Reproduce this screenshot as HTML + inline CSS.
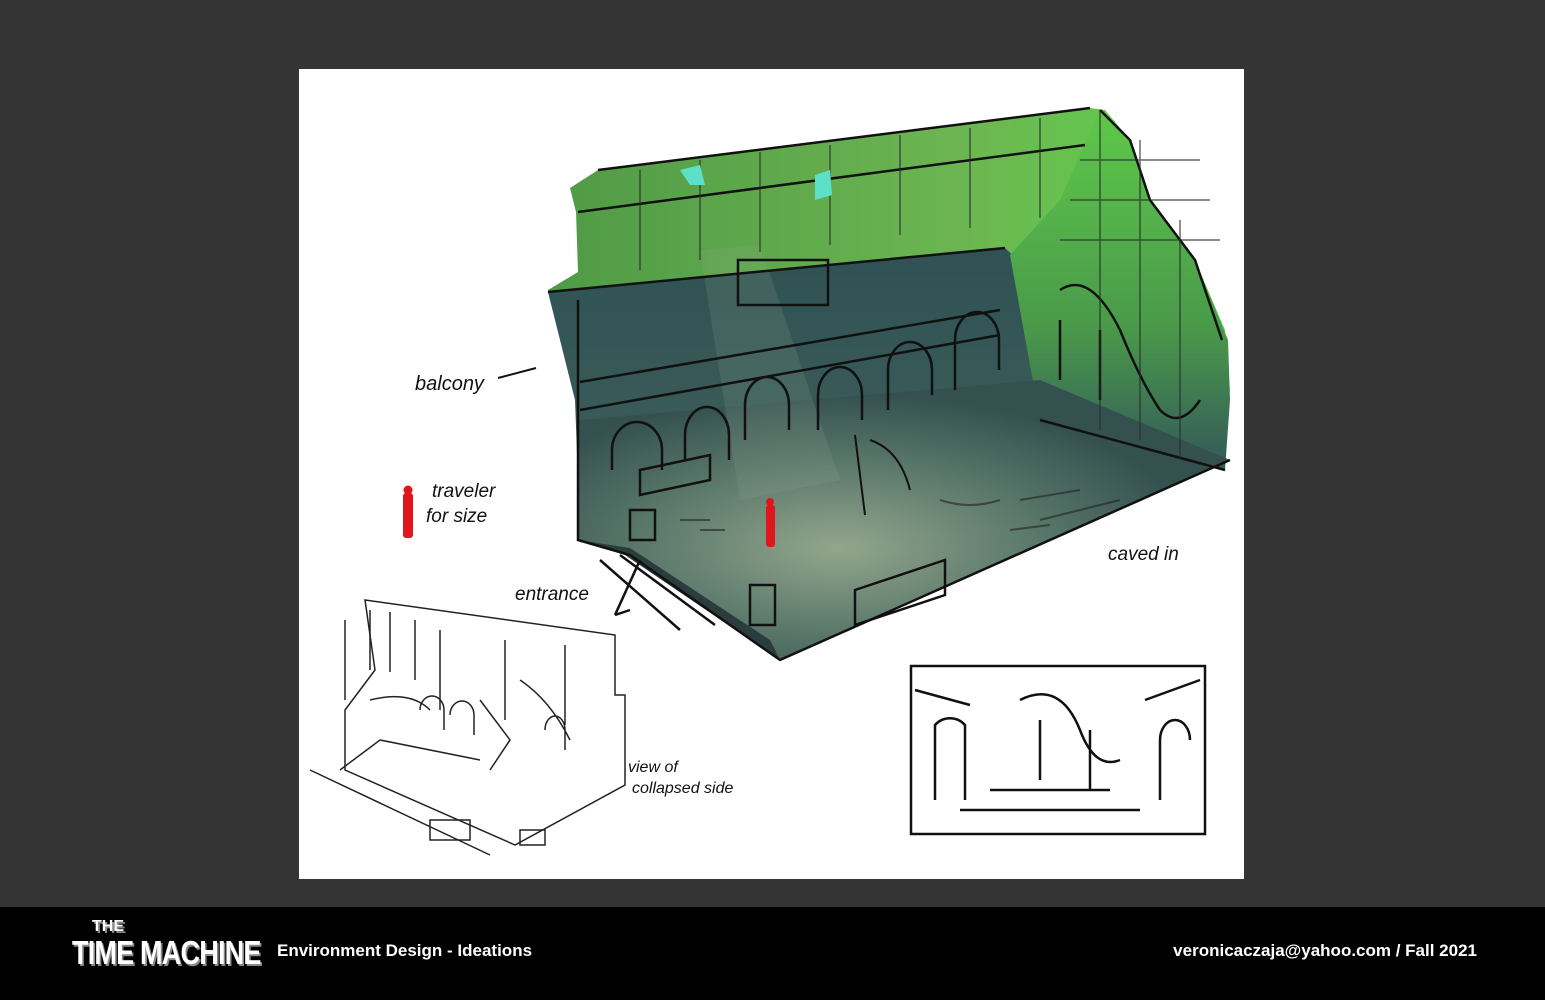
<!DOCTYPE html>
<html><head><meta charset="utf-8"><style>
body{margin:0;width:1545px;height:1000px;background:#343434;position:relative;overflow:hidden;font-family:"Liberation Sans",sans-serif}
#canvas{position:absolute;left:299px;top:69px;width:945px;height:810px;background:#fff}
#foot{position:absolute;left:0;top:907px;width:1545px;height:93px;background:#000;color:#fff}
.hand{font-family:"Liberation Sans",sans-serif;font-style:italic;fill:#111}
</style></head><body>
<div id="canvas"></div>
<svg width="1545" height="1000" style="position:absolute;left:0;top:0">
<defs>
<radialGradient id="fl" cx="0.4" cy="0.6" r="0.55"><stop offset="0" stop-color="#93a68c"/><stop offset="0.5" stop-color="#5f7c6e"/><stop offset="1" stop-color="#34514f"/></radialGradient>
<linearGradient id="gr" x1="0" y1="0" x2="1" y2="0"><stop offset="0" stop-color="#4f9a45"/><stop offset="0.6" stop-color="#6cb552"/><stop offset="1" stop-color="#5fd34a"/></linearGradient>
<linearGradient id="wl" x1="0" y1="0" x2="0" y2="1"><stop offset="0" stop-color="#2f5153"/><stop offset="1" stop-color="#3d5e5a"/></linearGradient>
<linearGradient id="rw" x1="0" y1="0" x2="0" y2="1"><stop offset="0" stop-color="#5ec84a"/><stop offset="0.6" stop-color="#4a9a4a"/><stop offset="1" stop-color="#33585a"/></linearGradient>
</defs>
<polygon points="570,188 598,170 1090,108 1105,110 1130,140 1150,200 1195,260 1225,330 1230,390 1200,430 1010,260 550,300 548,290 578,272 576,212" fill="url(#gr)"/>
<polygon points="548,292 1005,248 1040,280 1050,430 600,470 578,480 575,400" fill="url(#wl)"/>
<polygon points="1010,255 1060,200 1100,110 1130,140 1150,200 1195,260 1228,340 1230,400 1225,470 1100,440 1040,420" fill="url(#rw)"/>
<polygon points="578,420 1040,380 1230,460 780,660 625,555 578,540" fill="url(#fl)"/>
<polygon points="578,540 625,555 780,660 770,640 630,548" fill="#2a3d3c"/>
<polygon points="700,250 760,245 840,480 740,500" fill="#8fa890" opacity="0.18"/>
<g fill="none" stroke="#111" stroke-width="2.5">
<polyline points="598,170 1090,108"/><polyline points="578,212 1085,145"/>
<polyline points="548,292 1005,248"/><polyline points="580,382 1000,310"/><polyline points="580,410 1000,335"/>
<polyline points="578,300 578,540 630,555 780,660 1230,460"/>
<polyline points="1100,110 1130,140 1150,200 1195,260 1222,340"/>
<polyline points="1040,420 1225,470"/>
<path d="M612,470 v-20 a25,28 0 0 1 50,0 v20 M685,460 v-25 a22,28 0 0 1 44,0 v25 M745,440 v-35 a22,28 0 0 1 44,0 v25 M818,430 v-35 a22,28 0 0 1 44,0 v25 M888,410 v-40 a22,28 0 0 1 44,0 v25 M955,390 v-50 a22,28 0 0 1 44,0 v30"/>
<path d="M738,260 h90 v45 h-90z"/>
<path d="M1060,290 q30,-20 60,40 q20,50 40,80 q20,20 40,-10 M1060,320 v60 M1100,330 v70"/>
<path d="M640,470 l70,-15 v25 l-70,15z M855,590 l90,-30 v35 l-90,30z M750,585 h25 v40 h-25z M630,510 h25 v30 h-25z"/>
<path d="M600,560 l80,70 M620,555 l95,70 M640,560 l-25,55 M615,615 l15,-5"/>
<path d="M855,435 l10,80 M870,440 q30,10 40,50" stroke-width="2"/>
</g>
<g stroke="#222" stroke-width="2" fill="none" opacity="0.6">
<path d="M1020,500 l60,-10 M1040,520 l80,-20 M1010,530 l40,-5 M680,520 h30 M700,530 h25 M940,500 q30,10 60,0"/>
</g>
<g stroke="#2a2a2a" stroke-width="1.5" fill="none" opacity="0.7">
<path d="M640,170 v100 M700,160 v100 M760,152 v100 M830,145 v100 M900,135 v100 M970,128 v100 M1040,118 v100 M1080,160 l120,0 M1070,200 l140,0 M1060,240 l160,0 M1100,110 v320 M1140,140 v300 M1180,220 v240"/>
</g>
<polygon points="815,175 830,170 832,195 815,200" fill="#5de0c8"/><polygon points="680,170 700,165 705,185 690,185" fill="#5de0c8"/>
<g fill="#e0161b"><rect x="766" y="505" width="9" height="42" rx="3"/><circle cx="770" cy="502" r="4"/><rect x="403" y="493" width="10" height="45" rx="3"/><circle cx="408" cy="490" r="4.5"/></g>
<text x="415" y="390" class="hand" font-size="20">balcony</text><path d="M498,378 l38,-10" stroke="#111" stroke-width="2"/>
<text x="432" y="497" class="hand" font-size="19">traveler</text><text x="426" y="522" class="hand" font-size="19">for size</text>
<text x="515" y="600" class="hand" font-size="19">entrance</text>
<text x="1108" y="560" class="hand" font-size="19">caved in</text>
<text x="628" y="772" class="hand" font-size="16">view of</text><text x="632" y="793" class="hand" font-size="16">collapsed side</text>
<g fill="none" stroke="#222" stroke-width="1.5">
<path d="M365,600 l250,35 v60 l10,0 v90 l-110,60 -170,-75 v-60 l30,-40z"/>
<path d="M345,620 v80 M415,620 v60 M440,630 v80 M505,640 v80 M565,645 v80 M370,610 v60 M390,612 v60"/>
<path d="M310,770 l180,85 M340,770 l40,-30 l100,20"/>
<path d="M370,700 q40,-10 60,10 M520,680 q30,20 50,60 M420,710 a12,14 0 0 1 24,0 v20 M450,715 a12,14 0 0 1 24,0 v20 M545,730 a10,14 0 0 1 20,0 v20"/>
<path d="M430,820 h40 v20 h-40z M520,830 h25 v15 h-25z M480,700 l30,40 l-20,30"/>
</g>
<g fill="none" stroke="#111" stroke-width="2.5">
<rect x="911" y="666" width="294" height="168"/>
<path d="M915,690 l55,15 M1200,680 l-55,20 M935,800 v-75 a20,20 0 0 1 30,0 v75 M1160,800 v-60 a15,20 0 0 1 30,0"/>
<path d="M960,810 h180 M990,790 h120 M1020,700 q40,-20 60,30 q15,40 40,30 M1040,720 v60 M1090,730 v60"/>
</g>
</svg>
<div id="foot">
<div style="position:absolute;left:72px;top:12px;width:192px;font-family:'Liberation Sans',sans-serif;font-weight:bold;color:#fff;text-align:center;text-shadow:2px 2px 0 #888">
<div style="font-size:16px;line-height:16px;margin-left:-120px">THE</div>
<div style="font-size:33px;line-height:36px;letter-spacing:-1px;transform:scaleX(0.82);transform-origin:left;white-space:nowrap">TIME MACHINE</div></div>
<div style="position:absolute;left:277px;top:34px;font-size:17px;font-weight:bold">Environment Design - Ideations</div>
<div style="position:absolute;right:68px;top:34px;font-size:17px;font-weight:bold">veronicaczaja@yahoo.com / Fall 2021</div>
</div>
</body></html>
